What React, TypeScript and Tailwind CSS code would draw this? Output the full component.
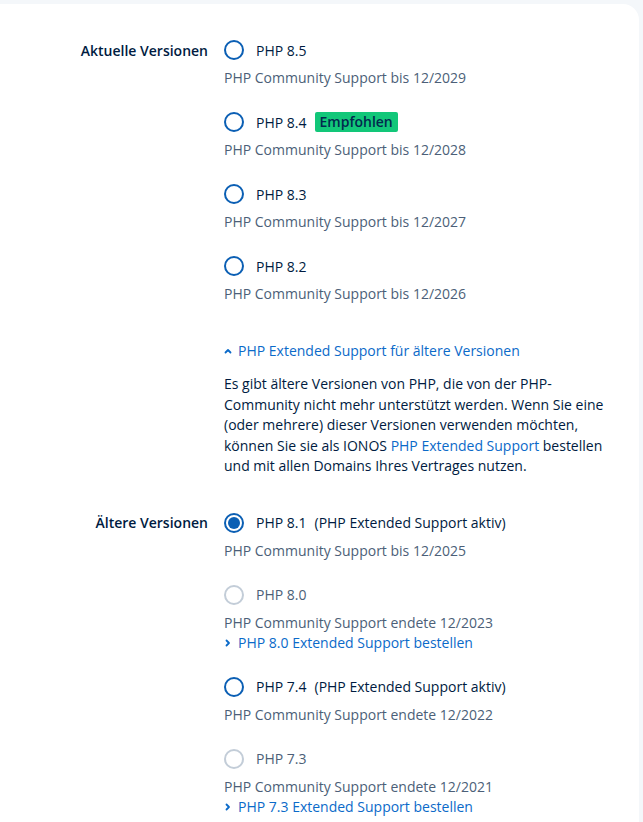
import type { ReactNode } from "react";

type Option = {
  version: string;
  note?: string;
  badge?: string;
  sub: string;
  checked?: boolean;
  disabled?: boolean;
  orderLink?: string;
};

const CURRENT: Option[] = [
  { version: "PHP 8.5", sub: "PHP Community Support bis 12/2029" },
  { version: "PHP 8.4", badge: "Empfohlen", sub: "PHP Community Support bis 12/2028" },
  { version: "PHP 8.3", sub: "PHP Community Support bis 12/2027" },
  { version: "PHP 8.2", sub: "PHP Community Support bis 12/2026" },
];

const OLDER: Option[] = [
  {
    version: "PHP 8.1",
    note: "(PHP Extended Support aktiv)",
    sub: "PHP Community Support bis 12/2025",
    checked: true,
  },
  {
    version: "PHP 8.0",
    sub: "PHP Community Support endete 12/2023",
    disabled: true,
    orderLink: "PHP 8.0 Extended Support bestellen",
  },
  {
    version: "PHP 7.4",
    note: "(PHP Extended Support aktiv)",
    sub: "PHP Community Support endete 12/2022",
  },
  {
    version: "PHP 7.3",
    sub: "PHP Community Support endete 12/2021",
    disabled: true,
    orderLink: "PHP 7.3 Extended Support bestellen",
  },
];

function Chevron({ dir }: { dir: "up" | "right" }) {
  return (
    <svg width="8" height="8" viewBox="0 0 8 8" className="shrink-0">
      <path
        d={dir === "up" ? "M1.5 5.5 L4 3 L6.5 5.5" : "M2.5 1.5 L5 4 L2.5 6.5"}
        fill="none"
        stroke="currentColor"
        strokeWidth="1.8"
        strokeLinecap="round"
        strokeLinejoin="round"
      />
    </svg>
  );
}

function Radio({ checked, disabled }: { checked?: boolean; disabled?: boolean }) {
  return (
    <span
      className={`flex h-5 w-5 shrink-0 items-center justify-center rounded-full border-2 ${
        disabled ? "border-[#c3cdd8]" : "border-[#0b5fb4]"
      }`}
    >
      {checked && <span className="h-3 w-3 rounded-full bg-[#0b5fb4]" />}
    </span>
  );
}

function VersionOption({ o }: { o: Option }) {
  return (
    <div className="mb-[22px] last:mb-0">
      <div className="flex h-6 items-center">
        <Radio checked={o.checked} disabled={o.disabled} />
        <span className={`ml-3 ${o.disabled ? "text-[#4c5f78]" : "text-[#001b41]"}`}>
          {o.version}
        </span>
        {o.note && <span className="ml-2 text-[#001b41]">{o.note}</span>}
        {o.badge && (
          <span className="ml-2 rounded-[2px] bg-[#12c779] px-[5px] text-[14px] leading-5 font-semibold text-[#02294e]">
            {o.badge}
          </span>
        )}
      </div>
      <div className="mt-1.5 leading-5 text-[#4c5f78]">{o.sub}</div>
      {o.orderLink && (
        <a className="flex items-center gap-1.5 leading-5 text-[#0b6ac9]">
          <Chevron dir="right" />
          {o.orderLink}
        </a>
      )}
    </div>
  );
}

function Section({ label, children }: { label: string; children: ReactNode }) {
  return (
    <div className="grid grid-cols-[208px_1fr] gap-x-4">
      <div className="flex h-6 items-center justify-end font-semibold text-[#001b41]">
        {label}
      </div>
      <div>{children}</div>
    </div>
  );
}

export default function App() {
  return (
    <div
      className="min-h-screen bg-[#f4f7fa] pt-1 text-[14px]"
      style={{ fontFamily: '"Open Sans", "Liberation Sans", sans-serif' }}
    >
      <div className="h-[818px] w-[639px] rounded-tr-2xl bg-white pt-[34px]">
        <Section label="Aktuelle Versionen">
          {CURRENT.map((o) => (
            <VersionOption key={o.version} o={o} />
          ))}
          <a className="mt-[37px] flex items-center gap-1.5 leading-5 text-[#0b6ac9]">
            <Chevron dir="up" />
            PHP Extended Support für ältere Versionen
          </a>
          <p className="mt-[13px] max-w-[390px] leading-[20.5px] text-[#001b41]">
            Es gibt ältere Versionen von PHP, die von der PHP-Community nicht mehr
            unterstützt werden. Wenn Sie eine (oder mehrere) dieser Versionen verwenden
            möchten, können Sie sie als IONOS{" "}
            <a className="text-[#0b6ac9]">PHP Extended Support</a> bestellen und mit
            allen Domains Ihres Vertrages nutzen.
          </p>
        </Section>
        <div className="mt-[34px]">
          <Section label="Ältere Versionen">
            {OLDER.map((o) => (
              <VersionOption key={o.version} o={o} />
            ))}
          </Section>
        </div>
      </div>
    </div>
  );
}
